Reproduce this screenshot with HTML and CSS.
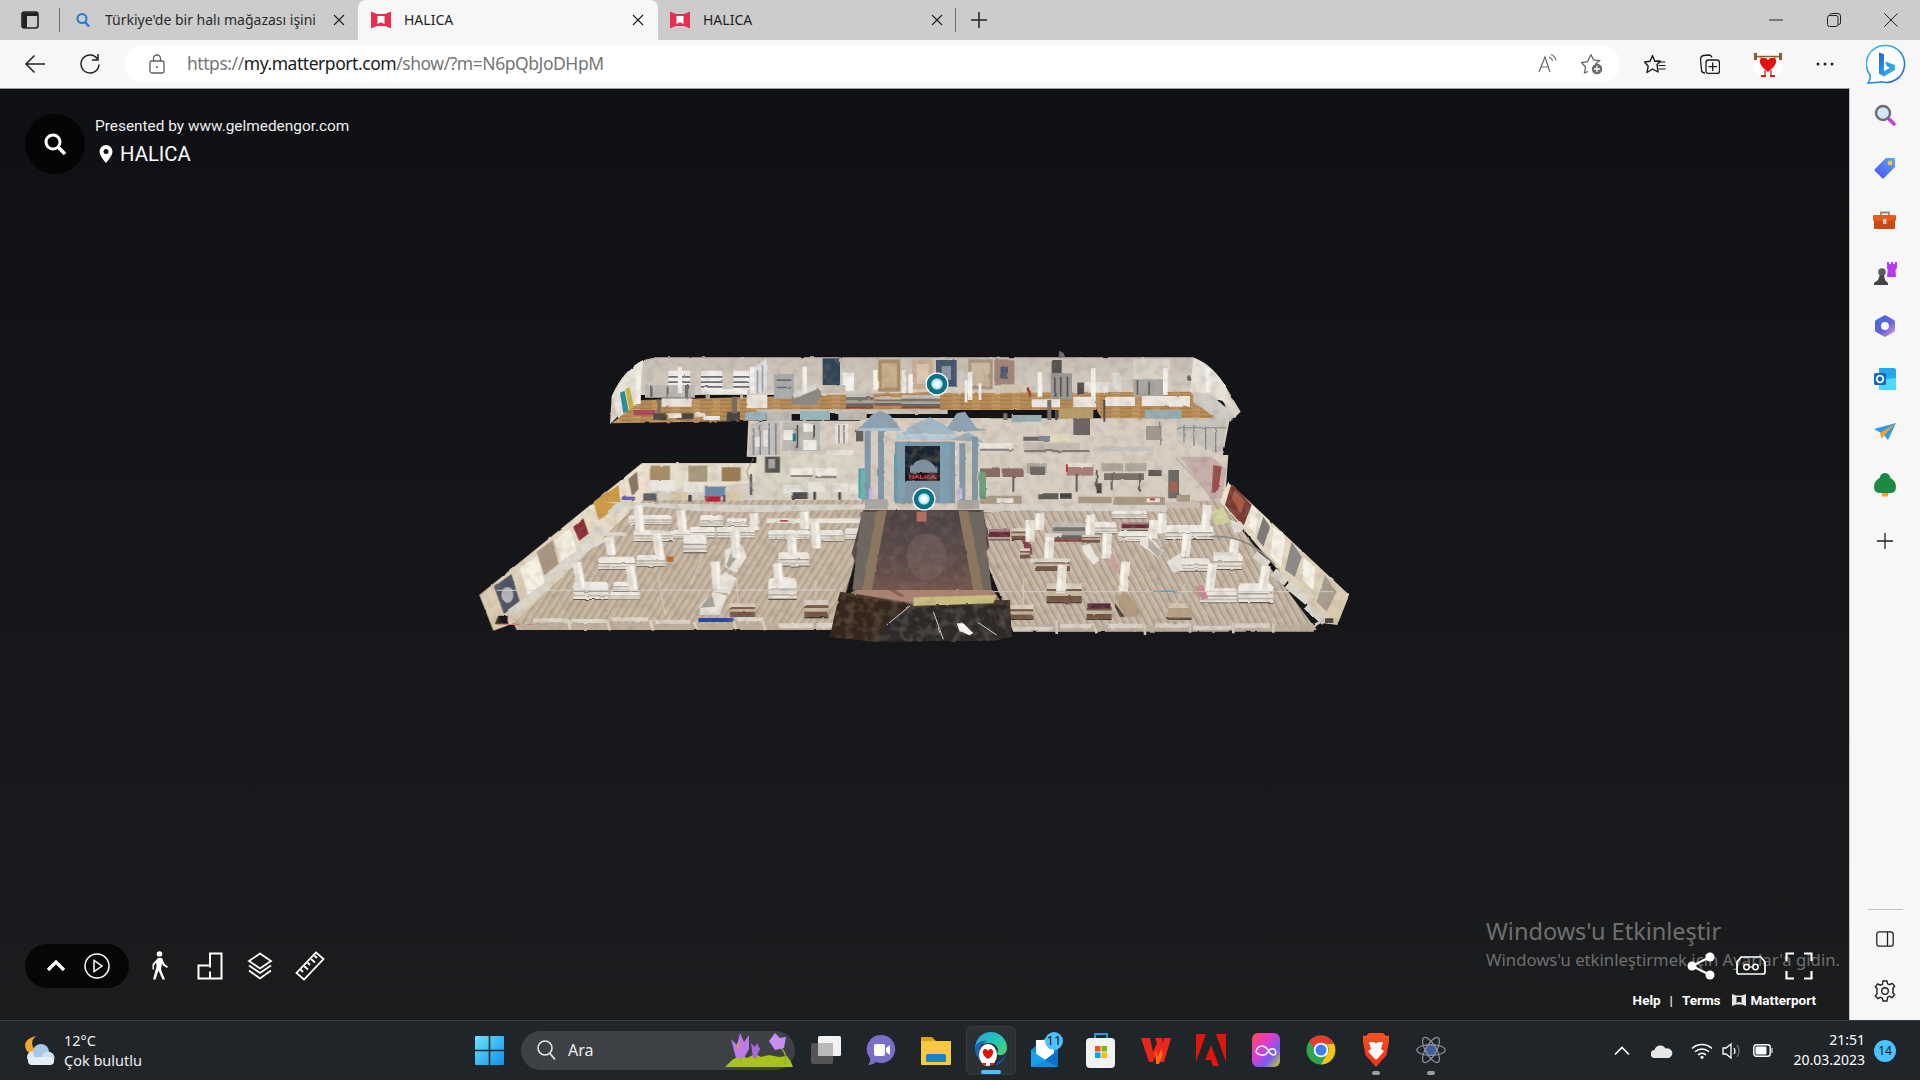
FILE: index.html
```html
<!DOCTYPE html>
<html lang="tr">
<head>
<meta charset="utf-8">
<title>HALICA</title>
<link rel="stylesheet" href="styles.css">
</head>
<body>
<svg class="defs" width="0" height="0" aria-hidden="true">
  <defs>
    <symbol id="mp" viewBox="0 0 20 20">
      <path fill="#e5304f" d="M0 1.500l6 2.500h8l6-2.500v17l-6-2.500H6l-6 2.500z"/>
      <path fill="#fff" d="M6.500 6h7v8l-3.500-1.800L6.500 14z"/>
    </symbol>
    <symbol id="avatar" viewBox="0 0 30 30">
      <circle cx="15" cy="15" r="15" fill="#fff"/>
      <path stroke="#8a5a30" stroke-width="1.500" d="M3 7.500h24"/>
      <path fill="#8a5a30" d="M1 4h3v7H1zM26 4h3v7h-3z"/>
      <path fill="none" stroke="#a5532a" stroke-width="1.300" d="M8 8l1 4M22 8l-1 4"/>
      <path fill="#e2120f" d="M15 23C10 19 6 15 7 11c1-3 6-3 8 0 2-3 7-3 8 0 1 4-3 8-8 12z"/>
      <path fill="none" stroke="#d21" stroke-width="1.300" d="M12 21v6M18 21v6"/>
      <path fill="#e2120f" d="M8 26h5v2H8zM17 26h5v2h-5z"/>
    </symbol>
    <linearGradient id="wallL" x1="0" y1="0" x2="0" y2="1"><stop offset="0" stop-color="#efe6d4"/><stop offset="1" stop-color="#d8c9ae"/></linearGradient>
    <linearGradient id="wallT" x1="0" y1="0" x2="0" y2="1"><stop offset="0" stop-color="#c9bfb4"/><stop offset="1" stop-color="#e0d8cd"/></linearGradient>
    <linearGradient id="carpet" x1="0" y1="0" x2="0" y2="1"><stop offset="0" stop-color="#4d4245"/><stop offset=".6" stop-color="#5f4c4a"/><stop offset="1" stop-color="#7d5d50"/></linearGradient>
    <linearGradient id="road" x1="0" y1="0" x2="0" y2="1"><stop offset="0" stop-color="#4b3a2c"/><stop offset="1" stop-color="#2c2529"/></linearGradient>
    <pattern id="planks" patternUnits="userSpaceOnUse" width="22" height="30" patternTransform="skewX(-32)">
      <rect width="22" height="30" fill="#bfae9b"/>
      <rect width="6" height="30" fill="#cfc0ac"/>
      <rect x="10" width="3" height="30" fill="#a89888"/>
      <rect x="16" width="2" height="30" fill="#d6c8b5"/>
    </pattern>
    <pattern id="planksR" patternUnits="userSpaceOnUse" width="22" height="30" patternTransform="skewX(28)">
      <rect width="22" height="30" fill="#bdad9b"/>
      <rect width="6" height="30" fill="#cfc0af"/>
      <rect x="10" width="3" height="30" fill="#a49687"/>
      <rect x="16" width="2" height="30" fill="#d4c7b7"/>
    </pattern>
    <pattern id="wood" patternUnits="userSpaceOnUse" width="60" height="12">
      <rect width="60" height="12" fill="#b98d58"/>
      <rect y="5" width="34" height="3" fill="#a27540"/>
      <rect x="38" y="9" width="22" height="2" fill="#d0aa78"/>
    </pattern>
    <filter id="grain" x="-2%" y="-2%" width="104%" height="104%">
      <feTurbulence type="fractalNoise" baseFrequency=".11" numOctaves="2" seed="7" result="n"/>
      <feDisplacementMap in="SourceGraphic" in2="n" scale="2.2" xChannelSelector="R" yChannelSelector="G" result="d"/>
      <feGaussianBlur in="d" stdDeviation=".32" result="b"/>
      <feColorMatrix in="n" type="matrix" values="0 0 0 0 .25 0 0 0 0 .2 0 0 0 0 .15 .7 0 0 0 -.3" result="t"/>
      <feComposite in="t" in2="b" operator="in" result="s"/>
      <feMerge><feMergeNode in="b"/><feMergeNode in="s"/></feMerge>
    </filter>
    <g id="w">
      <path fill="#f0ece5" d="M0 8l6-8h88l6 8v16H0z"/>
      <path fill="#a8a197" d="M0 24h100v4H0z"/>
      <path fill="#e6e1d8" d="M0 28h100v9H0z"/>
      <path fill="#b5aea3" d="M0 37h100v3H0z"/>
      <path fill="#e9e4db" d="M0 40h100v7H0z"/>
      <path fill="#5e564c" d="M0 47h100v3H0z"/>
    </g>
    <g id="b">
      <path fill="#d9cfc1" d="M0 0h100v14H0z"/>
      <path fill="#7a5a4a" d="M0 14h100v8H0z"/>
      <path fill="#c6b7a3" d="M0 22h100v10H0z"/>
      <path fill="#74543f" d="M0 32h100v14H0z"/>
      <path fill="#3e3530" d="M0 46h100v4H0z"/>
    </g>
    <g id="m">
      <path fill="#a8808a" d="M0 0h100v12H0z"/>
      <path fill="#6b2a3a" d="M0 12h100v24H0z"/>
      <path fill="#b8a898" d="M0 36h100v10H0z"/>
      <path fill="#3a302c" d="M0 46h100v4H0z"/>
    </g>
    <g id="g">
      <path fill="#c3c0ba" d="M0 0h100v14H0z"/>
      <path fill="#77746f" d="M0 14h100v10H0z"/>
      <path fill="#a9a6a0" d="M0 24h100v10H0z"/>
      <path fill="#66625e" d="M0 34h100v10H0z"/>
      <path fill="#8a3a3a" d="M0 44h100v6H0z"/>
    </g>
    <path id="colsL" d="M320 322L335 402M480 332L492 408M418 248L425 300M560 230L570 305M736 320L742 402M795 225L800 310M922 325L928 382M965 240L968 300M505 150L510 230M632 165L638 225M1035 200L1040 280M852 175L855 225M1003 170L1005 222"/>
    <path id="colsR" d="M247 330L242 415M210 240L205 310M150 195L150 260M180 175L178 225M332 180L330 240M382 235L378 310M437 320L430 410M522 195L518 250M548 175L545 235M622 235L615 305M698 325L688 410M765 250L758 305M858 332L848 405M682 150L676 225"/>
    <radialGradient id="pinC"><stop offset=".2" stop-color="#fff"/><stop offset=".65" stop-color="#d5eef3"/><stop offset="1" stop-color="#8fd0dd"/></radialGradient>
  </defs>
</svg>

<header class="tabstrip">
  <div class="strip-toggle">
    <svg width="18" height="18" viewBox="0 0 18 18"><rect x="1" y="1" width="16" height="16" rx="2.500" fill="none" stroke="#222" stroke-width="1.600"/><path d="M1.500 1.500h15V5h-15zM1.500 5H6v11.500H2.500l-1-1z" fill="#222"/></svg>
  </div>
  <span class="strip-sep"></span>
  <div class="tab tab-first">
    <svg class="fav" width="20" height="20" viewBox="0 0 20 20"><circle cx="9" cy="8.500" r="4.500" fill="none" stroke="#1f7ad1" stroke-width="2"/><path d="M12 12l4 4.500" stroke="#1f7ad1" stroke-width="2.200"/></svg>
    <span class="tab-title">Türkiye'de bir halı mağazası işini</span>
    <svg class="tab-x" width="12" height="12" viewBox="0 0 12 12"><path d="M1 1l10 10M11 1L1 11" stroke="#222" stroke-width="1.200"/></svg>
  </div>
  <div class="tab tab-active">
    <svg class="fav" width="20" height="20"><use href="#mp"/></svg>
    <span class="tab-title">HALICA</span>
    <svg class="tab-x" width="12" height="12" viewBox="0 0 12 12"><path d="M1 1l10 10M11 1L1 11" stroke="#222" stroke-width="1.200"/></svg>
  </div>
  <div class="tab tab-third">
    <svg class="fav" width="20" height="20"><use href="#mp"/></svg>
    <span class="tab-title">HALICA</span>
    <svg class="tab-x" width="12" height="12" viewBox="0 0 12 12"><path d="M1 1l10 10M11 1L1 11" stroke="#222" stroke-width="1.200"/></svg>
  </div>
  <span class="strip-sep"></span>
  <div class="strip-new">
    <svg width="18" height="18" viewBox="0 0 18 18"><path d="M9 1v16M1 9h16" stroke="#222" stroke-width="1.500"/></svg>
  </div>
  <div class="winctl">
    <span class="winbtn"><svg width="14" height="14" viewBox="0 0 14 14"><path d="M0 7h14" stroke="#222" stroke-width="1"/></svg></span>
    <span class="winbtn"><svg width="14" height="14" viewBox="0 0 14 14"><rect x=".5" y="2.500" width="10.500" height="11" rx="2" fill="none" stroke="#222"/><path d="M3 2.500V2q0-1.500 1.500-1.500H11q2.500 0 2.500 2.500v7q0 1.500-2 1.500" fill="none" stroke="#222"/></svg></span>
    <span class="winbtn"><svg width="14" height="14" viewBox="0 0 14 14"><path d="M.5.500l13 13M13.500.500l-13 13" stroke="#222" stroke-width="1"/></svg></span>
  </div>
</header>

<nav class="toolbar">
  <span class="tb-back"><svg width="22" height="20" viewBox="0 0 22 20"><path d="M21 10H2M10.500 1.500L2 10l8.500 8.500" fill="none" stroke="#222" stroke-width="1.500"/></svg></span>
  <span class="tb-reload"><svg width="22" height="22" viewBox="0 0 22 22"><path d="M18.500 6A9 9 0 1 0 20 11.500" fill="none" stroke="#222" stroke-width="1.500"/><path d="M19 1v6h-6" fill="none" stroke="#222" stroke-width="1.500"/></svg></span>
  <div class="address">
    <svg class="lock" width="16" height="20" viewBox="0 0 16 20"><rect x="1" y="7" width="14" height="12" rx="2" fill="none" stroke="#5f5f5f" stroke-width="1.300"/><path d="M4.500 7V4.500a3.500 3.500 0 0 1 7 0V7" fill="none" stroke="#5f5f5f" stroke-width="1.300"/><circle cx="8" cy="13" r="1" fill="#5f5f5f"/></svg>
    <span class="url"><span class="url-dim">https://</span><span class="url-host">my.matterport.com</span><span class="url-dim">/show/?m=N6pQbJoDHpM</span></span>
    <svg class="addr-read" width="20" height="20" viewBox="0 0 20 20"><path d="M1 18L7 3l5 15M3 13h8" fill="none" stroke="#666" stroke-width="1.200"/><path d="M11 3q3 1 3.500 4M13 .5q4 1.500 5 6" fill="none" stroke="#666" stroke-width="1.100"/></svg>
    <svg class="addr-fav" width="22" height="22" viewBox="0 0 22 22"><path d="M10 1.500l2.500 5.500 6 .7-4 3.300M7 18.500l-3.500 1.500 1-6-4-4.500 6-.8L10 1.500" fill="none" stroke="#666" stroke-width="1.300"/><circle cx="16" cy="16" r="5.200" fill="#6b6b6b"/><path d="M16 13v6M13 16h6" stroke="#fff" stroke-width="1.300"/></svg>
  </div>
  <span class="tb-cell tb-favs"><svg width="22" height="20" viewBox="0 0 22 20"><path d="M13 7L16.500 7.300 13 10.500 14 18 8.500 15 3 18.500 4.200 12.300.5 8l5.700-.8L8.500 1.500l2.300 5.700z" fill="none" stroke="#1b1b1b" stroke-width="1.400" stroke-linejoin="round"/><path d="M14 8h7.500M14.500 11.500h7M14.500 15h7" stroke="#1b1b1b" stroke-width="1.200"/></svg></span>
  <span class="tb-cell tb-coll"><svg width="20" height="20" viewBox="0 0 20 20"><path d="M5 19q-3 0-3.500-2.500L.5 5q0-3 3-3.500L9 1q2 0 3 2.500" fill="none" stroke="#1b1b1b" stroke-width="1.300"/><rect x="6" y="6" width="13.500" height="13.500" rx="2.500" fill="#f7f7f7" stroke="#1b1b1b" stroke-width="1.300"/><path d="M12.700 8.500v8.500M8.500 12.700H17" stroke="#1b1b1b" stroke-width="1.300"/></svg></span>
  <span class="tb-cell tb-avatar"><svg width="30" height="30"><use href="#avatar"/></svg></span>
  <span class="tb-cell tb-more"><svg width="18" height="4" viewBox="0 0 18 4"><circle cx="2" cy="2" r="1.500"/><circle cx="9" cy="2" r="1.500"/><circle cx="16" cy="2" r="1.500"/></svg></span>
  <span class="tb-bing">
    <svg width="40" height="40" viewBox="0 0 40 40">
      <defs><linearGradient id="bg1" x1="0" y1="0" x2="1" y2="1"><stop offset="0" stop-color="#36c3f2"/><stop offset="1" stop-color="#1b5fd9"/></linearGradient><linearGradient id="bg2" x1="0" y1="0" x2="1" y2="1"><stop offset="0" stop-color="#1e5fd6"/><stop offset="1" stop-color="#38c9e8"/></linearGradient></defs>
      <path d="M20 1.500a18.500 18.500 0 1 1-5 36.300c-4 .8-8 1-13 1.200 2-2.500 2.600-5 2-8A18.500 18.500 0 0 1 20 1.500z" fill="#fff" stroke="url(#bg1)" stroke-width="1.600"/>
      <path d="M13 8.500l5 1.800v17l6-3.500-3-1.500-2-4.800 10 3.500v5l-11 6.500-5-2.800z" fill="url(#bg2)"/>
    </svg>
  </span>
</nav>

<main class="page">
  <section class="viewer">
    <div class="mp-head">
      <span class="mp-search"><svg width="26" height="26" viewBox="0 0 26 26"><circle cx="11" cy="11" r="7" fill="none" stroke="#fff" stroke-width="3"/><path d="M16 16l7 7" stroke="#fff" stroke-width="3.500"/></svg></span>
      <div class="mp-info">
        <div class="mp-by">Presented by www.gelmedengor.com</div>
        <div class="mp-name"><svg width="14" height="18" viewBox="0 0 14 18"><path fill-rule="evenodd" fill="#fff" d="M7 0a6.500 6.500 0 0 1 6.500 6.500C13.500 11 7 18 7 18S.5 11 .5 6.500A6.500 6.500 0 0 1 7 0zm0 4a2.500 2.500 0 1 0 0 5 2.500 2.500 0 0 0 0-5z"/></svg><span>HALICA</span></div>
      </div>
    </div>

    <svg class="dollhouse" width="900" height="310" viewBox="470 340 900 310">
      <g filter="url(#grain)">
        <path fill="#d6ccbf" d="M860 418H990V512H860z"/>
        <!-- upper-left section: crop origin 600,350 -->
        <g transform="translate(600 350) scale(.3333)">
          <path fill="url(#wallT)" d="M170 22H1040V135H120L30 222 35 140Q70 60 130 30z"/>
          <path fill="#e9e4da" d="M35 140Q70 60 130 30l-15 135-60 40z"/>
          <path fill="url(#wood)" d="M125 150L1040 125V182H500L470 212 35 220z"/>
          <path fill="#c8c1b3" d="M470 178H1040V192H470z"/>
          <path fill="#2b8c9a" d="M60 128l14-6 12 60-16 8z"/><path fill="#c9b23c" d="M76 118l12-6 14 60-14 8z"/>
          <path fill="#eee" d="M205 62h66v56h-66zM303 62h64v58h-64zM400 62h48v58h-48z"/>
          <path fill="#6f6c6c" d="M205 78h66v5h-66zM303 78h64v5h-64zM400 78h48v5h-48zM205 94h66v5h-66zM303 94h64v5h-64zM400 94h48v5h-48zM303 108h64v5h-64zM400 108h48v5h-48z"/>
          <path fill="#f2efea" d="M305 118h136v14h-136z"/><path fill="#b7b0a4" d="M320 132h10v15h-10zM420 132h10v15h-10z"/>
          <path fill="#bdbab5" d="M135 105h150v38H135z"/><path fill="#6f6d6c" d="M150 110h8v30h-8zM200 110h6v30h-6zM255 105h10v36h-10z"/>
          <path fill="#e9e4db" d="M185 145h90v25h-90zM440 135h62v40h-62z"/>
          <path fill="#dfe2e3" d="M462 52l38-28v100l-38 8z"/><path fill="#9fa3a5" d="M470 60h5v70h-5zM485 45h5v80h-5z"/>
          <path fill="#a9adad" d="M522 72h60v74h-60z"/><path fill="#6a6c6e" d="M530 88h44v5h-44zM530 110h44v5h-44z"/>
          <path fill="#8d8a86" d="M575 138l70-30 20 18-15 38h-75z"/><path fill="#d9d6d0" d="M578 132l65-26 8 12-68 28z"/>
          <path fill="#2e4558" d="M668 25h52v80h-52z"/>
          <path fill="#f4f2ee" d="M728 68h34v54h-34z"/>
          <path fill="#c7bfb0" d="M668 105h68v24h-68z"/>
          <path fill="#a98e67" d="M835 28h66v97h-66z"/><path fill="#c7b08d" d="M845 40h46v72h-46z"/>
          <path fill="#c8ad96" d="M936 28h63v90h-63z"/><path fill="#ddc9b4" d="M950 42h36v60h-36z"/>
          <use href="#g" transform="translate(738 128) scale(.82 .95)"/>
          <use href="#g" transform="translate(825 142) scale(.8 .5)"/>
          <use href="#g" transform="translate(905 135) scale(1.2 .8)"/>
          <path fill="none" stroke="#f4f1eb" stroke-width="13" d="M116 62v100M240 50v80M456 50v80M614 50v80M826 60v60M912 60v70M932 75v55"/>
          <path fill="#a9485c" d="M100 180h66v16h-66z"/>
          <path fill="#4a4542" d="M160 190h40v20h-40zM230 190h50v18h-50zM380 185h40v30h-40z"/>
          <path fill="#e9e6df" d="M205 190h40v14h-40zM285 188h30v12h-30zM310 198h50v12h-50z"/>
          <path fill="#7a6b5c" d="M170 150h12v40h-12zM395 140h16v50h-16z"/>
          <path fill="#98b5bd" d="M435 186h65v24h-65zM600 183h90v27h-90z"/>
          <path fill="#bcb9b3" d="M500 186h75v28h-75zM715 186h85v24h-85z"/>
          <!-- mid room -->
          <path fill="#d8cec1" d="M445 212H1040V360H480V322L440 320z"/>
          <path fill="#c5c2bd" d="M450 225l40-12h50v106h-95z"/>
          <path fill="#858b90" d="M458 235h5v80h-5zM478 225h5v90h-5zM505 220h5v95h-5zM525 220h5v95h-5z"/>
          <path fill="#e6e2db" d="M465 260h14v30h-14zM490 240h14v50h-14z"/>
          <path fill="#bcb8b2" d="M548 215h112v88h-112z"/>
          <path fill="#f0ece6" d="M550 240h30v30h-30zM610 220h30v25h-30zM610 270h40v30h-40z"/>
          <path fill="#2c7e8c" d="M578 250h10v24h-10z"/><path fill="#55514e" d="M590 225h5v70h-5zM640 225h5v40h-5z"/>
          <path fill="#e7e2da" d="M705 222h40v58h-40zM680 300h80v22h-80z"/><path fill="#807c78" d="M715 225h4v55h-4zM730 225h4v55h-4z"/>
          <path fill="#625e5b" d="M768 240h22v34h-22z"/>
          <path fill="#b4afa8" d="M490 322h175v14H490z"/>
          <path fill="#5a5552" d="M497 322h30v36h-30z"/>
          <path fill="#ebe5dc" d="M575 345h70v15h-70z"/>
        </g>
        <!-- upper-right section: crop origin 960,350 -->
        <g transform="translate(960 350) scale(.3333)">
          <path fill="url(#wallT)" d="M-60 22H700Q760 45 800 115L842 185 810 215 790 150H-60z"/>
          <path fill="#e8e2d8" d="M700 24Q760 45 800 115L820 175 745 130 690 125z"/>
          <path fill="#d8d2c7" d="M520 28h110v90h-110zM400 95h60v30h-60z"/>
          <path fill="url(#wood)" d="M-60 130L690 125 782 205 560 218H432L410 180H-60z"/>
          <path fill="#3f5570" d="M-72 30h62v80h-62z"/><path fill="#8a96a5" d="M-55 48h28v42h-28z"/>
          <path fill="#a89680" d="M25 28h73v90H25z"/><path fill="#c9b9a2" d="M34 38h55v70H34z"/>
          <path fill="#a2857a" d="M103 28h60v78h-60z"/><path fill="#3e5570" d="M122 50h22v36h-22z"/>
          <path fill="#cfc3af" d="M120 103h68v22h-68z"/>
          <path fill="#9a9894" d="M272 70h64v78h-64z"/><path fill="#55534f" d="M282 80h5v60h-5zM300 80h5v60h-5zM320 80h5v60h-5zM275 30h30v40h-30z"/><path fill="#6e6c68" d="M298 2l12 6 6 14h-20z"/>
          <path fill="#a9a7a3" d="M520 88h90v52h-90z"/><path fill="#60605f" d="M530 90h5v45h-5zM565 95h5v40h-5z"/>
          <path fill="#e8e3da" d="M375 96h70v32h-70z"/><path fill="#4f4d4c" d="M352 98h20v34h-20z"/>
          <path fill="#ece8e0" d="M215 148h85v24h-85zM340 140h68v32h-68zM435 140h90v28h-90zM545 138h75v30h-75zM620 138h70v32h-70z"/>
          <path fill="#a5342f" d="M205 110l12 30-8 2-10-26z"/>
          <path fill="none" stroke="#f6f3ee" stroke-width="14" d="M30 65v85M240 65v75M400 55v85M616 55v80M745 55v70"/><path fill="none" stroke="#f4f1ec" stroke-width="8" d="M18 90v70M60 100v50"/>
          <path fill="#dcd9d3" d="M458 68h26v56h-26z"/>
          <path fill="#cfccc6" d="M700 130l60 10 70 60-25 15-30-5-75-55z"/>
          <path fill="#676462" d="M680 78l10-2 5 16h-12z"/>
          <!-- front strip and mid room -->
          <path fill="#d8cec1" d="M-60 205H810L780 360H-60z"/>
          <path fill="#c7c4be" d="M650 208l150-3-10 95-20 10-120-55z"/>
          <path fill="#8a8885" d="M670 225h4v50h-4zM700 228h4v60h-4zM735 230h4v70h-4zM765 232h4v75h-4zM650 232h150v3h-150z"/>
          <path fill="#a1988e" d="M558 228h44v42h-44z"/>
          <path fill="#8f8c88" d="M600 215h4v70h-4z"/>
          <path fill="#b89c6c" d="M295 175h105v32h-105z"/><path fill="#78716b" d="M130 190h12v20h-12zM262 150h12v60h-12z"/>
          <path fill="#96adb2" d="M155 195h90v20h-90zM555 180h110v26h-110z"/><path fill="#4d4b4a" d="M285 180h8v30h-8zM430 150h6v65h-6z"/>
          <path fill="#6a6562" d="M190 260h90v12h-90zM340 205h50v50h-50z"/><path fill="#7b8aa0" d="M235 258h40v12h-40z"/>
          <path fill="#c6bdb2" d="M190 278h170v32h-170z"/><path fill="#827a72" d="M190 300h200v6h-200z"/>
          <path fill="#e3d9bf" d="M270 250h55v24h-55zM330 320h60v20h-60z"/>
          <path fill="#eee8df" d="M-60 300h50v18h-50zM60 280h100v16H60zM190 318h140v20H190zM390 320h100v20H390z"/><path fill="#868280" d="M60 296h100v6H60z"/>
          <path fill="#b39a86" d="M520 320h130v36h-130z"/><path fill="#c7c2bc" d="M400 290h180v14H400z"/>
          <path fill="#c0202c" d="M318 340h5v18h-5z"/>
        </g>
        <!-- lower left: crop origin 470,455 -->
        <g transform="translate(470 455) scale(.3333)">
          <path fill="#d8cec1" d="M515 25H1195V160H450z"/>
          <path fill="url(#planks)" d="M130 505L520 135H1190L1160 300 1095 525H140z"/>
          <path fill="url(#wallL)" d="M515 25L28 420 70 527 132 505 545 110z"/>
          <path fill="#e8dfcf" d="M515 25H860V82L540 110z"/>
          <path fill="#f7f1e4" d="M150 340l50-40 30 100-50 40zM255 255l45-35 25 80-45 40zM415 130l35-30 20 55-30 25z"/>
          <path fill="#a88f68" d="M540 32h60v44h-60z"/><path fill="#a99a80" d="M655 32h57v48h-57z"/><path fill="#9c7c55" d="M755 37h57v42h-57z"/>
          <path fill="#4d5262" d="M72 395l52-38 26 85-48 35z"/><ellipse cx="112" cy="420" rx="18" ry="24" fill="#b4b4ba"/>
          <path fill="#a89682" d="M200 290l48-35 18 72-42 38z"/>
          <path fill="#8a2d38" d="M310 215l30-25 16 46-28 22z"/>
          <path fill="#cb9c45" d="M370 140l76-50 6 60-66 46z"/>
          <path fill="#8a7664" d="M475 72l26-22 5 52-20 20z"/>
          <path fill="none" stroke="#dbd6cc" stroke-width="24" d="M120 475l115-85M228 372l110-85M332 270l70-54M420 178l62-48"/>
          <path fill="#6c5fb0" d="M455 125h40v10h-40z"/>
          <!-- back row -->
          <path fill="#ebe7df" d="M545 75h75v34h-75zM640 85h60v25h-60z"/>
          <path fill="#d7c9a9" d="M600 112h50v22h-50zM770 110h40v28h-40z"/>
          <path fill="#5a5c6a" d="M520 115h40v22h-40z"/><path fill="#6c87a8" d="M705 95h60v30h-60z"/>
          <path fill="#b3243a" d="M708 124h44v16h-44z"/>
          <path fill="#4a4643" d="M655 120h10v20h-10zM760 120h6v20h-6zM840 60h6v60h-6z"/>
          <path fill="#dcd4c6" d="M860 0H1190V135H850z"/>
          <path fill="#55524f" d="M885 5h45v48h-45z"/><path fill="#a8a5a0" d="M895 12h20v28h-20z"/>
          <path fill="#f0ebe3" d="M962 38h66v28h-66zM1036 38h64v32h-64z"/><path fill="#8c8781" d="M962 60h66v6h-66zM1036 62h64v8h-64z"/>
          <path fill="#e8e4dd" d="M940 90h60v24h-60zM1015 82h50v30h-50zM1088 85h46v26h-46zM1140 90h40v28h-40z"/>
          <path fill="#4a4a4c" d="M965 112h48v20h-48zM1030 110h8v24h-8zM1105 112h8v22h-8z"/>
          <path fill="#53a6b0" d="M1165 40h20v90h-20z"/>
          <path fill="none" stroke="#97918a" stroke-width="3" d="M850 110l-20-60 20-40"/>
          <!-- beam -->
          <path fill="#dad5cb" d="M400 140L620 146 850 150 1190 148V163L850 172 680 168 600 160 480 152z"/>
          <!-- stacks -->
          <use href="#w" transform="translate(490 225) scale(1.2 .7)"/><use href="#w" transform="translate(610 225) scale(.5 .5)"/><use href="#w" transform="translate(660 215) scale(.75 .7)"/>
          <use href="#w" transform="translate(740 215) scale(1.15 .7)"/><use href="#w" transform="translate(895 225) scale(1.25 .6)"/><use href="#w" transform="translate(1045 225) scale(.75 .7)"/><use href="#w" transform="translate(1125 220) scale(.45 .7)"/>
          <use href="#w" transform="translate(475 180) scale(1.3 .6)"/><use href="#w" transform="translate(690 180) scale(.7 .7)"/><use href="#w" transform="translate(770 190) scale(.6 .5)"/>
          <path fill="#e9e4db" d="M890 190h300v14H890z"/><path fill="#b04a4a" d="M930 195h24v5h-24z"/>
          <use href="#w" transform="translate(385 305) scale(1.1 .8)"/><use href="#w" transform="translate(500 300) scale(.85 .7)"/>
          <use href="#w" transform="translate(640 240) scale(.7 1.1)"/><use href="#w" transform="translate(925 292) scale(.93 .85)"/>
          <path fill="#e9e5dd" d="M765 285l50-20 15 40-30 50-35-20z"/><path fill="#a8a298" d="M790 275l12 30-25 35-8-10z"/>
          <use href="#w" transform="translate(310 380) scale(1.05 1.1)"/><use href="#w" transform="translate(420 410) scale(.9 .5)"/><use href="#w" transform="translate(430 380) scale(.7 .6)"/>
          <use href="#w" transform="translate(895 370) scale(.85 1.3)"/>
          <path fill="#e9e5dd" d="M690 450l40-40 40 12-20 58h-60z"/><path fill="#aaa399" d="M725 415l10 40-45 3z"/>
          <path fill="#e9e5dd" d="M730 380l35-30 35 20-20 45-50-5z"/>
          <use href="#b" transform="translate(780 445) scale(.75 .8)"/>
          <use href="#b" transform="translate(1003 435) scale(.72 1.1)"/>
          <path fill="#e2ddd4" d="M330 275l80-30 20-5 5 6-100 50z"/><path fill="#b86a28" d="M590 305h20v15h-20z"/>
          <use href="#colsL" fill="none" stroke="#e9e4da" stroke-width="28"/>
          <g transform="translate(6 0)"><use href="#colsL" fill="none" stroke="#faf7f1" stroke-width="10"/></g>
          <path fill="#ddd8cf" d="M275 318l60-30v22l-55 14zM400 232h70v10h-70zM540 225h60v10h-60zM950 235h35v10h-35z"/>
          <path fill="none" stroke="#d7d6cf" stroke-width="3" d="M80 406L1100 405M565 370L585 478M700 300L660 390M1038 375V435M800 375l5 70"/>
          <!-- front strips -->
          <path fill="#bfae9b" d="M140 505H1095V525H160z"/>
          <path fill="#ded7ca" d="M190 490h105v12H190zM305 492h105v12H305zM425 487h110v12H425zM555 494h105v12H555zM800 487h80v12h-80zM925 505h105v14H925zM1040 503h55v15h-55z"/>
          <path fill="#2a46a0" d="M685 489h105v12H685z"/>
          <path fill="none" stroke="#dcd6ca" stroke-width="8" d="M295 495l6 28M412 498l8 28M540 497l10 30M672 502l10 24M792 498l6 28M880 498l6 28"/>
          <path fill="#15161a" d="M85 482h28v24H75z"/><path fill="#d08078" d="M80 507h110v3H80z"/>
        </g>
        <!-- lower right: crop origin 980,455 -->
        <g transform="translate(980 455) scale(.3333)">
          <path fill="#d8cfc2" d="M-30 0H745L735 140 -30 175z"/>
          <path fill="url(#planksR)" d="M-20 175L720 135 1010 525 100 530 60 420 10 300z"/>
          <path fill="url(#wallL)" d="M745 80L1108 420 1072 510 1030 505 720 140z"/>
          <path fill="#f7f2e7" d="M815 150l18 18-5 70-22-24zM880 215l35 32-12 90-30-35zM970 305l35 32-5 70-32-32z"/>
          <path fill="#7a3b34" d="M735 150l20-65 60 65-25 65z"/><path fill="#a85a45" d="M755 130l10-25 30 35-12 35z"/>
          <path fill="#7c7a7a" d="M830 250l20-65 20 30-20 60z"/>
          <path fill="#8f8a8a" d="M915 345l20-85 30 45-20 60z"/>
          <path fill="#a89e90" d="M1010 440l25-80 35 50-30 60z"/>
          <path fill="none" stroke="#dcd6cc" stroke-width="24" d="M980 452l55 48M922 388l62 52M880 352l40 30M825 298l40 32"/>
          <!-- pink corner -->
          <path fill="#c7b0aa" d="M600 5h95l45 35-15 90-30 5z"/>
          <path fill="#9a4d48" d="M700 30l25 5-10 70-20 10z"/>
          <path fill="none" stroke="#bdb6ab" stroke-width="5" d="M590 10l110 120"/>
          <!-- back row -->
          <path fill="#8a6a62" d="M0 40h60v26H0zM65 40h66v26H65z"/><path fill="#d8cfc4" d="M0 30h130v10H0z"/>
          <path fill="#a88078" d="M260 28h80v34h-80z"/><path fill="#e3dcd3" d="M262 24h76v12h-76z"/><path fill="#c0202c" d="M258 28h5v22h-5z"/>
          <path fill="#b1a89d" d="M365 25h65v24h-65zM435 25h65v24h-65zM140 25h60v30h-60z"/><path fill="#7a6f66" d="M372 55h120v20H372z"/>
          <path fill="#6e6a66" d="M150 35h45v25h-45z"/>
          <path fill="none" stroke="#5d615f" stroke-width="6" d="M100 60v50M290 55v55M395 60v45M480 55v55M350 45v55"/>
          <path fill="#6b6966" d="M565 45h32v85h-32z"/><path fill="#a96056" d="M570 80h22v30h-22z"/>
          <path fill="#5d5a57" d="M505 45h40v18h-40zM175 115h60v18h-60z"/><path fill="#4a4442" d="M240 115h35v16h-35zM350 85h15v30h-15z"/>
          <path fill="#a99a82" d="M0 122h125v24H0zM400 125h155v24H400zM295 125h100v20H295zM590 120h40v20h-40z"/><path fill="#e9e3da" d="M50 130h50v14H50zM500 130h40v12h-40z"/>
          <path fill="#b5342f" d="M510 130h15v6h-15z"/>
          <path fill="#5a8a6c" d="M0 50h18v80H0z"/>
          <!-- beam -->
          <path fill="#d8d3c9" d="M0 150H560L565 170 400 168 180 168 0 160z"/>
          <use href="#w" transform="translate(395 168) scale(1.05 .45)"/>
          <path fill="#d6d4a0" d="M690 168l40-8 22 40-45 12z"/><path fill="#e8e6e1" d="M750 195l30 8 8 22-25 8z"/>
          <path fill="#c9beb1" d="M560 140h100v20H560z"/>
          <!-- stacks -->
          <use href="#m" transform="translate(25 222) scale(.65 .68)"/><use href="#b" transform="translate(95 220) scale(.45 .7)"/>
          <use href="#g" transform="translate(220 200) scale(.95 1.2)"/><use href="#b" transform="translate(305 240) scale(.55 .45)"/><use href="#w" transform="translate(340 200) scale(.7 .75)"/>
          <use href="#m" transform="translate(425 202) scale(.9 .5)"/><use href="#w" transform="translate(415 228) scale(1 .65)"/>
          <use href="#w" transform="translate(555 210) scale(1.45 .9)"/>
          <path fill="#eae6de" d="M480 250l25-8 45 45-15 22-55-40z"/><path fill="#b8b2a8" d="M505 250l40 40-10 18-30-30z"/>
          <path fill="#eae6de" d="M305 272l25-6 25 50-15 14-30-40z"/>
          <path fill="#c9a59c" d="M385 305l15-5 20 45-12 10z"/>
          <path fill="#8a3c4c" d="M125 250l20-5 15 50-20 10z"/><use href="#b" transform="translate(120 280) scale(.3 .6)"/>
          <use href="#b" transform="translate(165 310) scale(1.05 .75)"/>
          <use href="#b" transform="translate(200 385) scale(1.05 1.2)"/>
          <use href="#b" transform="translate(85 450) scale(.75 .9)"/>
          <use href="#b" transform="translate(320 445) scale(.75 1)"/><path fill="#5a2c3c" d="M322 445h70v16h-70z"/>
          <path fill="#b39c82" d="M405 425l35-15 40 60-5 15h-40z"/><path fill="#4e3e34" d="M405 445l30 40h-15l-15-30z"/>
          <path fill="#b5a285" d="M560 450h75v45h-75z"/><path fill="#d6cab8" d="M565 445h60v14h-60z"/><path fill="#5d4e40" d="M560 488h75v7h-75z"/>
          <use href="#w" transform="translate(660 400) scale(1.1 .9)"/><path fill="#c98a90" d="M645 395l25-5 15 40-20 5z"/>
          <use href="#w" transform="translate(775 385) scale(1.05 1.2)"/>
          <use href="#w" transform="translate(600 310) scale(.9 .8)"/><path fill="#e4e0d8" d="M560 320l40-25 10 50-30 8z"/>
          <use href="#w" transform="translate(700 295) scale(.85 1)"/>
          <use href="#colsR" fill="none" stroke="#e9e4da" stroke-width="28"/>
          <g transform="translate(-6 0)"><use href="#colsR" fill="none" stroke="#f8f5ef" stroke-width="10"/></g>
          <path fill="#ddd8cf" d="M195 235h50v12h-50zM150 312h120v10H150z"/>
          <path fill="#e0dcd3" d="M750 210l30-12 18 20-25 18zM700 292h60v10h-60z"/>
          <path fill="none" stroke="#8e8a84" stroke-width="5" d="M690 245q110-10 195 85"/>
          <path fill="none" stroke="#d1d0ca" stroke-width="3" d="M0 410H1060M620 375L590 450M130 375V450"/><path stroke="#4fa3d6" stroke-width="4" d="M520 409h70"/>
          <!-- front strips -->
          <path fill="#bdad9b" d="M90 510H1010L1000 530H100z"/>
          <path fill="#d8d2c6" d="M100 515h120v12H100zM240 506h95v14h-95zM385 506h105v14H385zM525 505h100v13H525zM640 512h115v13H640zM765 505h105v14H765z"/>
          <path fill="none" stroke="#cfc8ba" stroke-width="8" d="M230 495v42M340 505l10 30M495 510v30M630 505v28M760 505v30M880 505v28M1005 510l25-15"/>
          <path fill="#3a3a38" d="M1035 490h25v14h-25z"/>
        </g>
        <!-- centre: crop origin 780,360 -->
        <g transform="translate(780 360) scale(.3333)">
          <path fill="url(#road)" d="M150 830L180 695 400 725 690 720 695 830 640 840 280 845z"/>
          <path fill="url(#carpet)" d="M250 450H610L628 560 605 600 635 690 620 725 400 735 225 700 230 620 215 580z"/>
          <path fill="#6d665e" d="M245 455h45l-35 235h-38zM565 455h45l25 235h-40z"/>
          <path fill="#8c7660" d="M290 452h30l-45 240h-28zM535 452h30l45 240h-30z"/>
          <path fill="#b98f7c" d="M225 690H640L660 720 400 728 210 700z" opacity=".8"/>
          <path fill="#c9c080" d="M400 712L650 705 640 730 400 738z"/>
          <path fill="#34271c" d="M150 830L178 705 390 735 330 780 280 845z"/>
          <path fill="#2f292c" d="M330 780L400 738 680 735 695 832 640 842 280 845z"/>
          <ellipse cx="440" cy="590" rx="60" ry="70" fill="#8a7570" opacity=".3"/>
          <path fill="none" stroke="#6e4a46" stroke-width="10" opacity=".6" d="M350 640l70 50M300 670l70 40"/>
          <path fill="#b86d5e" d="M410 455h30v30h-30z"/>
          <path fill="#fff" d="M530 790l20 0 30 30-12 6-30-14z"/>
          <path fill="none" stroke="#d4d4d4" stroke-width="3" d="M320 795L390 738M460 755L490 838M590 785L650 825"/>
          <path fill="#7d95a5" d="M345 245H525V430H345z"/>
          <path fill="#5fa0ae" d="M342 285h10v140h-10z"/>
          <path fill="#7fa0b2" d="M352 245h24v185h-24zM480 245h30v185h-30z"/>
          <path fill="#1a2633" d="M375 258h105v104H375z"/>
          <path fill="#7d91a0" d="M390 320q30-30 55-18 20 10 30 38H390z"/>
          <path fill="#2a0f14" d="M378 338h100v23H378z"/>
          <text x="428" y="356" class="sign" textLength="84" lengthAdjust="spacingAndGlyphs">HALICA</text>
          <path fill="#a3b8c6" d="M345 240L380 205 450 172 520 210 532 240z"/>
          <path fill="#bacbd6" d="M348 222h182v18H348z"/>
          <path fill="#8ea4b2" d="M235 208l40-43 25-12 30 12 32 43z"/><path fill="#afc4d2" d="M232 204h132v9H232z"/>
          <path fill="#8ea4b2" d="M500 206l30-46 25-5 35 50 35 5-85 6z"/>
          <path fill="#9bb0be" d="M510 240l55-24 45 30z"/>
          <path fill="none" stroke="#8199a9" stroke-width="18" d="M263 213V420M303 213V420M547 250V420M585 230V420"/>
          <path fill="none" stroke="#c8bcec" stroke-width="12" d="M272 385v33M541 385v33"/>
          <path fill="#6fb3ae" d="M243 330h14v90h-14z"/>
          <path fill="#6da07e" d="M598 335h20v75h-20z"/>
          <path fill="#a9a89e" d="M255 418h68v30h-68zM532 420h66v28h-66z"/>
        </g>
      </g>
      <circle cx="937" cy="384" r="11.500" fill="#fff"/><circle cx="937" cy="384" r="10.300" fill="#0b7386"/><circle cx="937" cy="384" r="5.800" fill="url(#pinC)"/>
      <circle cx="924" cy="499" r="11.500" fill="#fff"/><circle cx="924" cy="499" r="10.300" fill="#0b7386"/><circle cx="924" cy="499" r="5.800" fill="url(#pinC)"/>
    </svg>

    <div class="mp-foot">
      <div class="mp-left">
        <div class="pill">
          <svg width="20" height="12" viewBox="0 0 20 12"><path d="M2 10l8-8 8 8" fill="none" stroke="#fff" stroke-width="3.200"/></svg>
          <svg width="26" height="26" viewBox="0 0 26 26"><circle cx="13" cy="13" r="12" fill="none" stroke="#fff" stroke-width="1.500"/><path d="M10 7.500v11l8-5.500z" fill="none" stroke="#fff" stroke-width="1.500"/></svg>
        </div>
        <span class="mp-tool"><svg width="20" height="30" viewBox="0 0 20 30"><circle cx="9.500" cy="3" r="2.800" fill="#fff"/><path d="M8 7h4l2.500 6 3.500 2.500-1 1.500-4-2.500-1-2-1 6 4 10h-2.500l-4-9-3 9H3l3.500-13-.3-4-2.200 3v4H2.500V13z" fill="#fff"/></svg></span>
        <span class="mp-tool"><svg width="26" height="28" viewBox="0 0 26 28"><path d="M1.500 13.500H13V1.500h11.500v25h-23zM13 26.500v-7M13 13.500v2" fill="none" stroke="#fff" stroke-width="2"/></svg></span>
        <span class="mp-tool"><svg width="28" height="28" viewBox="0 0 28 28"><g fill="none" stroke="#fff" stroke-width="1.800"><path d="M14 1.500L25 9l-11 7.500L3 9z"/><path d="M3 13.500l11 7.500 11-7.500"/><path d="M3 18.500l11 8 11-8"/></g></svg></span>
        <span class="mp-tool"><svg width="30" height="30" viewBox="0 0 30 30"><g fill="none" stroke="#fff" stroke-width="1.800"><path d="M21 1.500L28.500 8 9 28.500 1.500 22z"/><path d="M9 15l4 3.500M12.500 11.500l2.500 2.500M16 8l4 3.500M19.500 4.500l2.500 2.500M5.500 18.500l2.500 2.500"/></g></svg></span>
      </div>
      <div class="mp-right">
        <div class="mp-icons">
          <svg width="32" height="32" viewBox="0 0 32 32"><path d="M25 7L7 16l18 9" fill="none" stroke="#fff" stroke-width="2.200"/><circle cx="25" cy="7" r="4.500" fill="#fff"/><circle cx="7" cy="16" r="4.500" fill="#fff"/><circle cx="25" cy="25" r="4.500" fill="#fff"/></svg>
          <svg width="30" height="20" viewBox="0 0 30 20"><path d="M5 1h20l4 5v10q0 2-2 2H3q-2 0-2-2V6z" fill="none" stroke="#fff" stroke-width="1.700"/><circle cx="10.500" cy="11" r="2.700" fill="none" stroke="#fff" stroke-width="1.500"/><circle cx="19.500" cy="11" r="2.700" fill="none" stroke="#fff" stroke-width="1.500"/><path d="M13 11h4" stroke="#fff" stroke-width="1.200"/></svg>
          <svg width="28" height="28" viewBox="0 0 28 28"><path d="M1.500 9V1.500H9M19 1.500h7.500V9M26.500 19v7.500H19M9 26.500H1.500V19" fill="none" stroke="#fff" stroke-width="2.200"/></svg>
        </div>
        <div class="mp-links">
          <span>Help</span><span class="pipe">|</span><span>Terms</span>
          <span class="mp-brand"><svg width="14" height="14" viewBox="0 0 14 14"><path fill="#e4e4e4" d="M0 1l4 1.500h6L14 1v12l-4-1.500H4L0 13z"/><path fill="#1a1b1d" d="M4.500 4h5v6L7 8.800 4.500 10z"/></svg>Matterport</span>
        </div>
      </div>
    </div>

    <div class="activate">
      <div class="act-title">Windows'u Etkinleştir</div>
      <div class="act-sub">Windows'u etkinleştirmek için Ayarlar'a gidin.</div>
    </div>
  </section>

  <aside class="sidebar">
    <span class="side-item"><svg width="22" height="22" viewBox="0 0 22 22"><circle cx="9" cy="9" r="7" fill="#cfe9f6" stroke="#6d6d6d" stroke-width="2.400"/><path d="M14.500 14.500l5.500 5.500" stroke="#c238dd" stroke-width="3.400" stroke-linecap="round"/></svg></span>
    <span class="side-item"><svg width="22" height="22" viewBox="0 0 22 22"><defs><linearGradient id="tg" x1="0" y1="1" x2="1" y2="0"><stop offset="0" stop-color="#4a4df0"/><stop offset="1" stop-color="#5fa6fb"/></linearGradient></defs><path d="M12 1h8q1 0 1 1v8L10 21q-1 1-2 0l-7-7q-1-1 0-2z" fill="url(#tg)"/><circle cx="16" cy="6" r="2.400" fill="#f6c93d"/></svg></span>
    <span class="side-item"><svg width="24" height="22" viewBox="0 0 24 22"><path d="M8 5V2.500h8V5" fill="none" stroke="#8c8c8c" stroke-width="1.800"/><rect y="5" width="23" height="6" rx="1" fill="#e8591b"/><path d="M1 11h21v7q0 1-1 1H2q-1 0-1-1z" fill="#c84a18"/><rect x="10" y="9" width="3.500" height="5" fill="#c9c9c9"/></svg></span>
    <span class="side-item"><svg width="24" height="24" viewBox="0 0 24 24"><path d="M14 0h2v2h2V0h2v2h2V0h2v6l-1.500 2 .5 7h-9l.7-7L14 6z" fill="#b63bf0"/><circle cx="9" cy="10" r="3.800" fill="#5c5c5c"/><path d="M7 13h4l1 5 3 3v2H1v-2l4-3z" fill="#444"/></svg></span>
    <span class="side-item"><svg width="22" height="22" viewBox="0 0 22 22"><defs><linearGradient id="m3" x1="0" y1="0" x2="1" y2="1"><stop offset="0" stop-color="#2f78d8"/><stop offset=".55" stop-color="#6d5dd3"/><stop offset="1" stop-color="#dba5e8"/></linearGradient></defs><path fill-rule="evenodd" fill="url(#m3)" d="M10 .5q1-.5 2 0l8 4.500q1 .5 1 2v8q0 1.500-1 2l-8 4.500q-1 .5-2 0L2 17q-1-.5-1-2V7q0-1.500 1-2zM11 7a4 4 0 1 0 0 8 4 4 0 0 0 0-8z"/></svg></span>
    <span class="side-item"><svg width="22" height="22" viewBox="0 0 22 22"><path d="M5 0h15q2 0 2 2v18q0 2-2 2H5z" fill="#28a8ea"/><path d="M9 11l13-1v10q0 2-2 2H5v-7z" fill="#50d9ff"/><rect y="5" width="12" height="12" rx="1.500" fill="#0f6cbd"/><circle cx="6" cy="11" r="3.300" fill="none" stroke="#fff" stroke-width="1.800"/></svg></span>
    <span class="side-item"><svg width="24" height="18" viewBox="0 0 24 18"><path d="M1 6L23 0l-8 17-5-6z" fill="#2b9bf0"/><path d="M23 0L7 10l1.500 6 3-4z" fill="#f2a324"/></svg></span>
    <span class="side-item"><svg width="22" height="24" viewBox="0 0 22 24"><path d="M8 19h6v4.500H8z" fill="#f0a21a"/><path d="M11 0q4 0 5.500 5 5.500 3 5.500 9 0 6-6 6H6q-6 0-6-6 0-6 5.500-9Q7 0 11 0z" fill="#1d8a43"/></svg></span>
    <span class="side-item side-add"><svg width="16" height="16" viewBox="0 0 16 16"><path d="M8 0v16M0 8h16" stroke="#222" stroke-width="1.300"/></svg></span>
    <div class="side-bottom">
      <span class="side-line"></span>
      <span class="side-item"><svg width="18" height="16" viewBox="0 0 18 16"><rect x=".8" y=".8" width="16.400" height="14.400" rx="2.500" fill="none" stroke="#222" stroke-width="1.300"/><path d="M11.500 1v14" stroke="#222" stroke-width="1.300"/></svg></span>
      <span class="side-item"><svg width="22" height="22" viewBox="0 0 22 22"><path fill="none" stroke="#222" stroke-width="1.400" d="M9 1h4l.6 2.800 2 .9 2.600-1.400 2.400 2.900-1.800 2.300.4 2-.4 2 1.800 2.300-2.400 2.900-2.600-1.400-2 .9L13 21H9l-.6-2.800-2-.9-2.600 1.400-2.400-2.900 1.800-2.300L2.800 11l.4-2-1.800-2.300 2.400-2.900 2.600 1.400 2-.9z"/><circle cx="11" cy="11" r="3.300" fill="none" stroke="#222" stroke-width="1.400"/></svg></span>
    </div>
  </aside>
</main>

<footer class="taskbar">
  <div class="weather">
    <svg width="34" height="32" viewBox="0 0 34 32"><path d="M14 1q-6 5-3 11 3 4 10 3-4 6-11 4T3 9q2-6 11-8z" fill="#f0a92b"/><circle cx="11" cy="22" r="6" fill="#dbe9f5"/><circle cx="19" cy="17" r="8" fill="#a8c8e5"/><circle cx="26" cy="23" r="6.500" fill="#cfe0ef"/><rect x="6" y="22" width="26" height="8" rx="4" fill="#e4eef7"/></svg>
    <div class="weather-text"><span>12°C</span><span>Çok bulutlu</span></div>
  </div>
  <svg class="start" width="29" height="29" viewBox="0 0 29 29"><defs><linearGradient id="win" x1="0" y1="0" x2="1" y2="1"><stop offset="0" stop-color="#6de4fb"/><stop offset="1" stop-color="#0e8fe8"/></linearGradient></defs><path fill="url(#win)" d="M1 0h12.700v13.700H0V1q0-1 1-1zM15.300 0H28q1 0 1 1v12.700H15.300zM0 15.300h13.700V29H1q-1 0-1-1zM15.300 15.300H29V28q0 1-1 1H15.300z"/></svg>
  <div class="tb-search">
    <svg width="20" height="22" viewBox="0 0 20 22"><circle cx="9" cy="9" r="7" fill="none" stroke="#e6e6e6" stroke-width="1.600"/><path d="M14 14.500l5 6" stroke="#e6e6e6" stroke-width="1.800"/></svg>
    <span>Ara</span>
    <svg class="flowers" width="68" height="34" viewBox="0 0 68 34"><path fill="#a9c21f" d="M0 34l7-7 9-5 6 3 8-4 6 3 8-2 10 2 8-1 4 6 2 5z"/><path fill="none" stroke="#93b02a" stroke-width="1.500" d="M16 28V16M31 26V14M55 14q9 8 4 18"/><path fill="#bd7ae8" d="M6 6l6 6 3-12 4 9 5-7v14l-5 9h-8z"/><path fill="#e59a3c" d="M12 10h2v6h-2z"/><path fill="#a868dc" d="M26 10l4 4 2-4 3 6-4 9h-3z"/><path fill="#c78df2" d="M44 8l6-8 5 5 6-1-2 11-9 2z"/></svg>
  </div>
  <div class="tasks">
    <span class="task"><svg width="32" height="30" viewBox="0 0 32 30"><rect x="1" y="8" width="22" height="21" rx="2" fill="#555"/><rect x="8" y="1" width="23" height="20" rx="1.500" fill="#f2f2f2"/><rect x="8" y="8" width="15" height="13" fill="#b9b9b9"/></svg></span>
    <span class="task"><svg width="30" height="32" viewBox="0 0 30 32"><path d="M15 1a14 14 0 1 1-5 27c-2 2-5 3-8 3 2-2 2.500-5 2-7A14 14 0 0 1 15 1z" fill="#7a6ec6"/><rect x="8" y="10" width="11" height="12" rx="2" fill="#fff"/><path d="M20 14l4-3v10l-4-3z" fill="#fff"/></svg></span>
    <span class="task"><svg width="32" height="30" viewBox="0 0 32 30"><path d="M1 2h11l4 4h15v5H1z" fill="#d9a412"/><rect x="1" y="6" width="30" height="24" rx="1" fill="#f7c93e"/><rect x="6" y="19" width="20" height="8" rx="1.500" fill="#1e7ec8"/></svg></span>
    <span class="task task-on">
      <svg width="34" height="36" viewBox="0 0 34 36"><defs><linearGradient id="eg" x1="0" y1="0" x2="1" y2="1"><stop offset="0" stop-color="#2a9fdb"/><stop offset=".5" stop-color="#25c5b5"/><stop offset="1" stop-color="#4cd66a"/></linearGradient></defs><path d="M17 0a16 16 0 0 1 16 16c0 6-6 9-10 6 3-5-1-11-8-11C9 11 3 13 1 17 1 7 8 0 17 0z" fill="url(#eg)"/><path d="M1 17c0-6 6-9 12-8-6 2-8 8-6 14 1 4 4 7 8 8C7 30 1 25 1 17z" fill="#1566b8"/><path d="M24 30q5-3 8-8-2 9-11 12z" fill="#0e5aa7"/><ellipse cx="14" cy="23" rx="9" ry="11" fill="#fff"/><path fill="#e2120f" d="M14 27c-3-2-6-5-5-8s4-2 5 0c1-2 4-3 5 0s-2 6-5 8z"/><path fill="#d21" d="M8 31h4v2H8zM16 31h4v2h-4z"/></svg>
      <i class="run run-blue"></i>
    </span>
    <span class="task"><svg width="36" height="36" viewBox="0 0 36 36"><path d="M3 18L17 6l13 6v23H3z" fill="#0f8fe0"/><path d="M8 8h18v14l-9 6-9-6z" fill="#fff"/><path d="M3 18l14 10-14 7z" fill="#18a2ee"/><path d="M30 18L17 28l13 7z" fill="#0a70c9"/><circle cx="26" cy="9" r="9" fill="#4cc2ff"/><text x="26" y="13" class="badge-num">11</text></svg></span>
    <span class="task"><svg width="30" height="36" viewBox="0 0 30 36"><path d="M9 8V2h12v6" fill="none" stroke="#18a0dc" stroke-width="2"/><rect y="6" width="29" height="30" rx="4" fill="#f2f2f2"/><path fill="#f25022" d="M9 14h5.500v5.500H9z"/><path fill="#7fba00" d="M15.500 14H21v5.500h-5.500z"/><path fill="#00a4ef" d="M9 20.500h5.500V26H9z"/><path fill="#ffb900" d="M15.500 20.500H21V26h-5.500z"/></svg></span>
    <span class="task"><svg width="30" height="28" viewBox="0 0 30 28"><path d="M0 2h9l3 14 4-9-2-5h7l1 5 1-5h7l-7 24h-5l-3-7-3 7H8z" fill="#e9271b"/><path d="M14 14l3 7 3-8 2 5-4 10h-3z" fill="#ff6a13"/></svg></span>
    <span class="task"><svg width="30" height="32" viewBox="0 0 30 32"><path d="M0 0h10L0 28zM20 0h10v28zM15 11l8 21h-6l-2-6h-6z" fill="#e3140c"/></svg></span>
    <span class="task"><svg width="28" height="34" viewBox="0 0 28 34"><defs><linearGradient id="cc" x1="0" y1="0" x2="1" y2="1"><stop offset="0" stop-color="#ff4d4d"/><stop offset=".35" stop-color="#e63bc5"/><stop offset=".7" stop-color="#7a5cf0"/><stop offset="1" stop-color="#c8d820"/></linearGradient></defs><rect width="28" height="34" rx="6" fill="url(#cc)"/><path d="M4 19q1-6 6-6 4 0 8 7 3 3 5 1.500 2-3-1-5.500-4-1-6 3-3 4-6 3-5-.5-6-3.500z" fill="none" stroke="#fff" stroke-width="1.500"/></svg></span>
    <span class="task"><svg width="30" height="36" viewBox="0 0 30 30"><circle cx="15" cy="15" r="14.500" fill="#2da44e"/><path d="M15 .5A14.500 14.500 0 0 1 28 9H15A6.500 6.500 0 0 0 8.800 13.500L3.300 6A14.500 14.500 0 0 1 15 .5z" fill="#e53c30"/><path d="M28 9a14.500 14.500 0 0 1-13 20.500l6-10.500a6.500 6.500 0 0 0-1-10z" fill="#fbc116"/><circle cx="15" cy="15" r="7.300" fill="#fff"/><circle cx="15" cy="15" r="5.500" fill="#3f7df0"/></svg></span>
    <span class="task"><svg width="26" height="34" viewBox="0 0 26 34"><defs><linearGradient id="br" x1="0" y1="0" x2="0" y2="1"><stop offset="0" stop-color="#f7521f"/><stop offset="1" stop-color="#f22e1a"/></linearGradient></defs><path d="M6 0h14l3 3 3-.5v6L23.500 22 13 34 2.500 22 0 8.500v-6L3 3z" fill="url(#br)"/><path d="M6 9h5l2 1.500L15 9h5l-2 7 3 2-5 6-3 3-3-3-5-6 3-2z" fill="#fff"/></svg><i class="run"></i></span>
    <span class="task"><svg width="30" height="30" viewBox="0 0 34 34"><circle cx="17" cy="17" r="7" fill="#3d5f9e"/><g fill="none" stroke="#8d9298" stroke-width="1.400"><ellipse cx="17" cy="17" rx="16" ry="6"/><ellipse cx="17" cy="17" rx="16" ry="6" transform="rotate(60 17 17)"/><ellipse cx="17" cy="17" rx="16" ry="6" transform="rotate(-60 17 17)"/></g></svg><i class="run"></i></span>
  </div>
  <div class="tray">
    <svg class="t-chev" width="16" height="10" viewBox="0 0 16 10"><path d="M1 8.500l7-7 7 7" fill="none" stroke="#fff" stroke-width="1.600"/></svg>
    <svg class="t-cloud" width="22" height="14" viewBox="0 0 22 14"><path d="M4 14a4 4 0 0 1-.5-8 6 6 0 0 1 11-1.500A4.500 4.500 0 0 1 18 14z" fill="#e6e6e6"/></svg>
    <svg class="t-wifi" width="22" height="16" viewBox="0 0 22 16"><g fill="none" stroke="#fff" stroke-width="1.400"><path d="M1 5.500a14.500 14.500 0 0 1 20 0"/><path d="M4 8.800a10 10 0 0 1 14 0"/><path d="M7 12a5.500 5.500 0 0 1 8 0"/></g><circle cx="11" cy="14.300" r="1.600" fill="#fff"/></svg>
    <svg class="t-vol" width="20" height="18" viewBox="0 0 20 18"><path d="M1 6h3l5-4v14l-5-4H1z" fill="none" stroke="#fff" stroke-width="1.300"/><path d="M12 6q2 3 0 6" fill="none" stroke="#fff" stroke-width="1.200"/><path d="M15 3q4 6 0 12" fill="none" stroke="#777" stroke-width="1.200"/></svg>
    <svg class="t-bat" width="20" height="13" viewBox="0 0 20 13"><rect x=".8" y=".8" width="16.400" height="11.400" rx="2.500" fill="none" stroke="#fff" stroke-width="1.400"/><rect x="2.500" y="2.500" width="11" height="8" rx="1" fill="#fff"/><path d="M18.500 4h1v5h-1z" fill="#fff"/></svg>
    <div class="clock"><span>21:51</span><span>20.03.2023</span></div>
    <span class="notif">14</span>
  </div>
</footer>
</body>
</html>
```
FILE: styles.css
```css
* { box-sizing: border-box; }
html, body { margin: 0; height: 100%; }
body {
  width: 1920px; height: 1080px; overflow: hidden;
  display: flex; flex-direction: column;
  font-family: "Noto Sans", "Open Sans", sans-serif;
  background: #f7f7f7; color: #222;
}
svg { display: block; flex: none; }
.defs { position: absolute; }

/* tab strip */
.tabstrip { height: 40px; flex: none; display: flex; align-items: center; background: #cccccc; }
.strip-toggle { width: 59px; display: flex; justify-content: center; }
.strip-sep { width: 1px; height: 24px; background: #6f6f6f; flex: none; }
.tab { height: 40px; display: flex; align-items: center; font-size: 14px; }
.tab-title { flex: 1; white-space: nowrap; overflow: hidden; padding-bottom: 2px; }
.tab-first { width: 298px; padding: 0 13px; gap: 12px; }
.tab-first .tab-title { color: #2a2a2a; }
.tab-active { width: 300px; padding: 0 14px 0 13px; gap: 13px; background: #f7f7f7; border-radius: 8px 8px 0 0; }
.tab-third { width: 295px; margin-left: 2px; padding: 0 12px 0 10px; gap: 13px; }
.strip-new { width: 46px; display: flex; justify-content: center; }
.winctl { margin-left: auto; display: flex; }
.winbtn { width: 57.5px; height: 40px; display: flex; align-items: center; justify-content: center; }

/* toolbar */
.toolbar { height: 48px; flex: none; display: flex; align-items: center; background: #f7f7f7; }
.tb-back { width: 70px; display: flex; justify-content: center; }
.tb-reload { width: 40px; display: flex; justify-content: center; }
.address {
  width: 1495px; height: 38px; margin-left: 15px;
  display: flex; align-items: center;
  padding-left: 24px;
  background: #fff; border-radius: 19px;
}
.lock { margin-right: 22px; }
.url { font-size: 17.5px; letter-spacing: -.45px; white-space: nowrap; color: #757575; padding-bottom: 2px; }
.url-host { color: #1a1a1a; }
.addr-read { margin-left: auto; margin-right: -2px; }
.addr-fav { margin-left: 25px; margin-right: 17px; }
.tb-cell { width: 56px; display: flex; justify-content: center; }
.tb-favs { margin-left: 7px; }
.tb-coll { margin-left: -1px; }
.tb-avatar { width: 59px; }
.tb-more svg { fill: #222; }
.tb-bing { width: 64px; display: flex; justify-content: center; margin-left: 1px; }

/* main */
.page { flex: 1; min-height: 0; display: flex; }
.viewer {
  position: relative;
  width: 1850px; display: flex; flex-direction: column;
  border-top: 1px solid #9a9da1;
  border-right: 1px solid #c4c4c4;
  background: linear-gradient(#0f1013, #1b1c1e);
  color: #fff; font-family: Roboto, sans-serif;
}
.mp-head { display: flex; align-items: flex-start; gap: 10px; margin: 25px 0 0 25px; }
.mp-search { width: 60px; height: 60px; border-radius: 50%; background: #050505; display: flex; align-items: center; justify-content: center; }
.mp-info { padding-top: 2px; }
.mp-by { font-size: 15.4px; line-height: 20px; color: #eee; }
.mp-name { display: flex; align-items: center; gap: 7px; margin-top: 6px; margin-left: 4px; font-size: 20.3px; line-height: 24px; }
.dollhouse { margin: 166px 0 0 470px; }
.sign { font: bold 17px Roboto, sans-serif; fill: #e8394c; text-anchor: middle; }

.mp-foot { margin-top: auto; display: flex; justify-content: space-between; align-items: flex-start; padding: 0 33px 8px 25px; }
.mp-left { display: flex; align-items: center; height: 44px; }
.pill { width: 104px; height: 44px; border-radius: 22px; background: #060606; display: flex; align-items: center; padding-left: 21px; gap: 18px; }
.mp-tool { width: 50px; display: flex; justify-content: center; }
.mp-tool:first-of-type { margin-left: 6px; }
.mp-right { display: flex; flex-direction: column; align-items: flex-end; position: relative; z-index: 1; }
.mp-icons { display: flex; align-items: center; gap: 19px; height: 44px; margin-right: 3px; }
.mp-links { display: flex; align-items: center; gap: 9px; height: 24px; font-size: 13.5px; font-weight: 700; }
.pipe { font-weight: 400; }
.mp-brand { display: flex; align-items: center; gap: 5px; margin-left: 2px; }
.activate { position: absolute; left: 1486px; top: 826px; color: #6f6f6f; white-space: nowrap; font-family: "Noto Sans", sans-serif; }
.act-title { font-size: 23.5px; line-height: 32px; }
.act-sub { font-size: 16.7px; line-height: 26px; }

/* sidebar */
.sidebar { flex: 1; display: flex; flex-direction: column; align-items: center; padding-top: 1px; background: #f7f7f7; }
.side-item { width: 100%; height: 52.75px; display: flex; align-items: center; justify-content: center; flex: none; }
.side-add { margin-top: 4px; }
.side-bottom { margin-top: auto; width: 100%; display: flex; flex-direction: column; align-items: center; padding-bottom: 3px; }
.side-line { width: 35px; height: 1px; background: #c2c2c2; margin-bottom: 3px; }
.side-bottom .side-item { height: 52px; }

/* taskbar */
.taskbar {
  height: 60px; flex: none; display: flex; align-items: center;
  background: #20252a; border-top: 1px solid #3b3d40; color: #fff;
}
.weather { width: 475px; display: flex; align-items: center; padding-left: 22px; gap: 8px; font-size: 14.5px; line-height: 20px; }
.weather-text { display: flex; flex-direction: column; color: #eee; padding-bottom: 2px; }
.tb-search {
  width: 274px; height: 39px; margin-left: 17px; margin-bottom: 1px;
  display: flex; align-items: center; gap: 12px;
  padding-left: 15px; border-radius: 20px; background: #3d4045; color: #eee; font-size: 16px;
}
.flowers { margin-left: auto; margin-right: 2px; }
.tasks { display: flex; margin-left: 3px; margin-bottom: 1px; }
.task { position: relative; width: 55px; height: 49px; display: flex; align-items: center; justify-content: center; border-radius: 5px; }
.task-on { background: #2c3035; border: 1px solid #363a3f; width: 50px; margin: 0 2.5px; }
.run { position: absolute; left: 50%; bottom: 0; width: 8px; height: 4px; margin-left: -4px; border-radius: 2px; background: #9a9da1; }
.run-blue { width: 20px; margin-left: -10px; background: #4cc2ff; }
.badge-num { font: 13px "Noto Sans", sans-serif; fill: #111; text-anchor: middle; }
.tray { margin-left: auto; display: flex; align-items: center; padding-right: 24px; }
.t-cloud { margin-left: 21px; }
.t-wifi { margin-left: 18px; }
.t-vol { margin-left: 9px; }
.t-bat { margin-left: 11px; }
.clock { margin-left: 20px; display: flex; flex-direction: column; align-items: flex-end; font-size: 14px; line-height: 20px; padding-bottom: 2px; }
.notif { width: 22px; height: 22px; margin-left: 9px; border-radius: 50%; background: #4cc2ff; color: #111; font-size: 12px; display: flex; align-items: center; justify-content: center; }
```
